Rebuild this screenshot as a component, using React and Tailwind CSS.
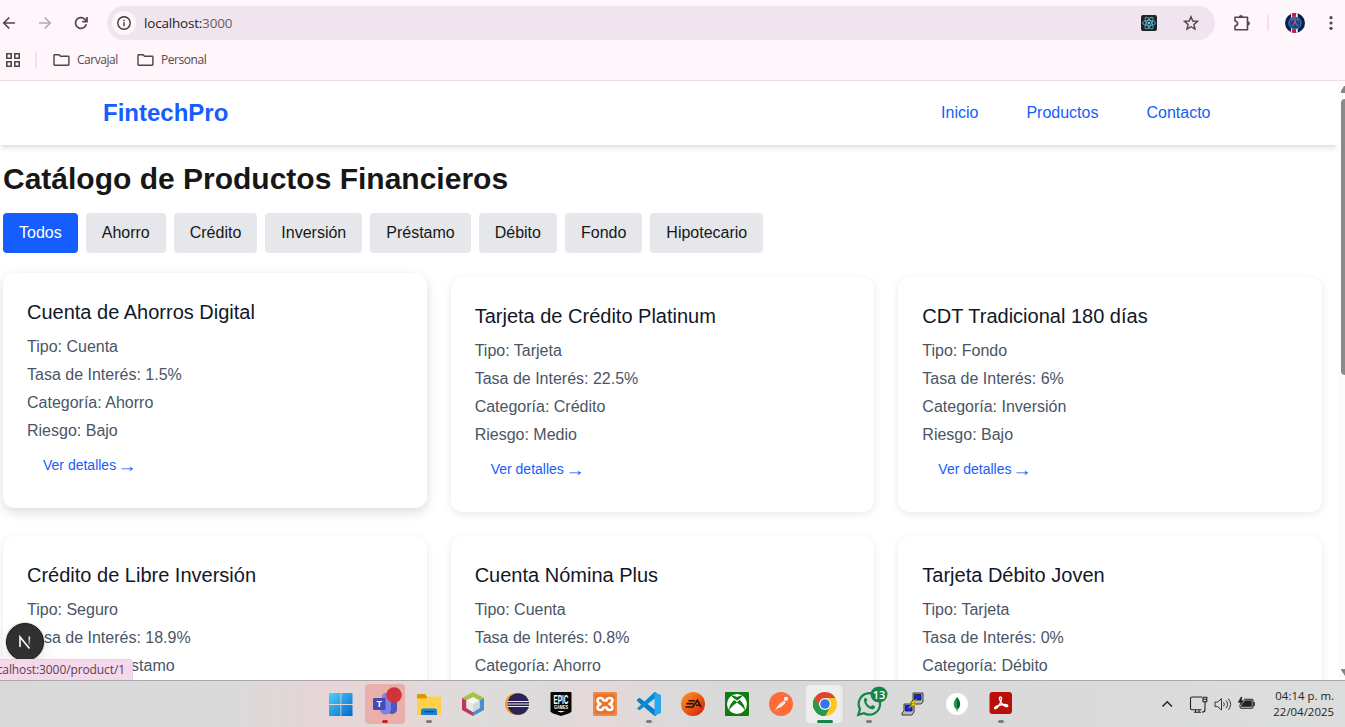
import React from 'react';

const categories = ['Todos', 'Ahorro', 'Crédito', 'Inversión', 'Préstamo', 'Débito', 'Fondo', 'Hipotecario'];

const products = [
  { name: 'Cuenta de Ahorros Digital', type: 'Cuenta', rate: '1.5%', category: 'Ahorro', risk: 'Bajo', hovered: true },
  { name: 'Tarjeta de Crédito Platinum', type: 'Tarjeta', rate: '22.5%', category: 'Crédito', risk: 'Medio' },
  { name: 'CDT Tradicional 180 días', type: 'Fondo', rate: '6%', category: 'Inversión', risk: 'Bajo' },
  { name: 'Crédito de Libre Inversión', type: 'Seguro', rate: '18.9%', category: 'Préstamo' },
  { name: 'Cuenta Nómina Plus', type: 'Cuenta', rate: '0.8%', category: 'Ahorro' },
  { name: 'Tarjeta Débito Joven', type: 'Tarjeta', rate: '0%', category: 'Débito' },
];

function Folder() {
  return (
    <svg className="block h-4 w-[17px] shrink-0" viewBox="0 0 17 16" fill="none" stroke="#4f4548" strokeWidth="1.4">
      <path d="M1 3.2Q1 2.7 1.5 2.7H6L7.6 4.2H15.3Q15.9 4.2 15.9 4.8V12.6Q15.9 13.3 15.3 13.3H1.7Q1 13.3 1 12.6Z" />
    </svg>
  );
}

function ReactBadge() {
  return (
    <svg className="block size-4" viewBox="0 0 16 16">
      <rect width="16" height="16" rx="2" fill="#222326" />
      <g fill="none" stroke="#5ab5cf" strokeWidth=".9">
        <ellipse cx="8" cy="8" rx="6.5" ry="2.5" />
        <ellipse cx="8" cy="8" rx="6.5" ry="2.5" transform="rotate(60 8 8)" />
        <ellipse cx="8" cy="8" rx="6.5" ry="2.5" transform="rotate(120 8 8)" />
      </g>
      <circle cx="8" cy="8" r="1.3" fill="#6bd0ec" />
    </svg>
  );
}

function Avatar() {
  return (
    <svg className="block size-5" viewBox="0 0 20 20">
      <defs><clipPath id="avatar"><circle cx="10" cy="10" r="10" /></clipPath></defs>
      <g clipPath="url(#avatar)">
        <rect width="20" height="20" fill="#06204d" />
        <rect x="6" width="1.2" height="20" fill="#eef0f5" />
        <rect x="7" width="3.2" height="20" fill="#cf2038" />
        <rect x="10.8" width="2" height="20" fill="#eef0f5" />
        <circle cx="10" cy="10" r="6.2" fill="#14498f" stroke="#8aa6cf" strokeWidth=".6" />
        <path d="M10 6.500 9.400 10 7 13M10 6.500l.6 3.500 2.400 3" stroke="#d84a62" strokeWidth="1.1" fill="none" />
        <path d="M6 7.500Q10 4 14 7.500" stroke="#7fa1d3" strokeWidth=".7" fill="none" />
      </g>
    </svg>
  );
}

function BrowserChrome() {
  return (
    <div className="h-[81px] shrink-0 border-b border-[#eedbe9] bg-[#fef6fa] font-['Open_Sans',sans-serif]">
      <div className="flex h-[46px] items-center">
        <svg className="block h-6 w-[107px] shrink-0" viewBox="0 0 107 24" fill="none" strokeWidth="1.7">
          <path d="M15 12H4M9.3 6.5 3.8 12l5.5 5.5" stroke="#57434f" />
          <path d="M39 12h11M44.7 6.5l5.5 5.5-5.5 5.5" stroke="#b6abb0" />
          <path d="M86.2 13.1A5.4 5.4 0 1 1 84.7 8.2L86.5 10" stroke="#57434f" />
          <path d="M87 6v4.7h-4.7" stroke="#57434f" />
        </svg>
        <div className="flex h-[34px] w-[1108px] shrink-0 items-center rounded-full bg-[#f0e5ee] pr-4 pl-[5px]">
          <div className="flex size-6 items-center justify-center rounded-full bg-[#fef6fa]">
            <svg className="block size-4" viewBox="0 0 16 16" fill="none" stroke="#403539" strokeWidth="1.4">
              <circle cx="8" cy="8" r="6.2" />
              <path d="M8 7.3v3.9M8 4.7v1.5" />
            </svg>
          </div>
          <div className="ml-2 text-[13.5px] tracking-[-0.2px] text-[#231d20]">localhost:<span className="text-[#6b5d65]">3000</span></div>
          <div className="ml-auto flex items-center gap-[26px]">
            <ReactBadge />
            <svg className="block size-4" viewBox="0 0 16 16" fill="none" stroke="#50444b" strokeWidth="1.4">
              <path d="M8 1.7 9.8 6l4.7.4-3.6 3.1 1.1 4.6L8 11.7 4 14.1l1.1-4.6L1.5 6.4 6.2 6Z" />
            </svg>
          </div>
        </div>
        <svg className="ml-[18px] block h-[18px] w-[18px]" viewBox="0 0 18 18" fill="none" stroke="#57434f" strokeWidth="1.6">
          <path d="M2 3.300H14.500V15.700H2V12Q4.600 11.500 4.600 9.500 4.600 7.500 2 7Z" strokeLinejoin="round" />
          <path d="M6.300 3a1.700 1.700 0 0 1 3.400 0ZM15 7.700a1.700 1.700 0 0 1 0 3.400Z" fill="#57434f" strokeWidth=".6" />
        </svg>
        <div className="ml-4 h-4 w-0.5 bg-[#ffd8f2]" />
        <div className="ml-4"><Avatar /></div>
        <svg className="ml-[22px] block h-4 w-1.5" viewBox="0 0 6 16" fill="#57434f"><circle cx="4" cy="2.7" r="1.6" /><circle cx="4" cy="8" r="1.6" /><circle cx="4" cy="13.3" r="1.6" /></svg>
      </div>
      <div className="flex h-7 items-center pl-1.5 text-[12px] tracking-[-0.45px] text-[#54474e]">
        <svg className="block h-3.5 w-3.5" viewBox="0 0 14 14" fill="none" stroke="#4f4548" strokeWidth="1.6"><path d="M.8.8h4.4v4.4H.8zM8.8.8h4.4v4.4H8.8zM.8 8.8h4.4v4.4H.8zM8.8 8.8h4.4v4.4H8.8z" /></svg>
        <div className="ml-[15px] h-4 w-0.5 bg-[#ffd8f2]" />
        <div className="ml-[16px] flex w-[84px] items-center gap-[7px]"><Folder />Carvajal</div>
        <div className="flex items-center gap-[7px]"><Folder />Personal</div>
      </div>
    </div>
  );
}

function ProductCard({ product }) {
  return (
    <article className={product.hovered
      ? 'h-[235px] -translate-y-1 rounded-xl bg-white px-6 pt-[25px] shadow-[0_4px_12px_rgba(0,0,0,0.15)]'
      : 'h-[235px] rounded-xl bg-white px-6 pt-[25px] shadow-[0_2px_8px_rgba(0,0,0,0.09)]'}>
      <h2 className="mb-[9px] text-xl leading-7 text-[#101828]">{product.name}</h2>
      <div className="flex flex-col gap-1 text-base leading-6 text-[#4a5565]">
        <p>Tipo: {product.type}</p>
        <p>Tasa de Interés: {product.rate}</p>
        <p>Categoría: {product.category}</p>
        {product.risk && <p>Riesgo: {product.risk}</p>}
      </div>
      {product.risk && (
        <a className="mt-1 flex h-9 items-center px-4 text-sm leading-5 text-[#155dfc]">
          Ver detalles&nbsp;<span className="-ml-[3px] w-3.5 origin-left scale-x-[1.4] scale-y-[1.3]">→</span>
        </a>
      )}
    </article>
  );
}

function TaskIcon({ name }) {
  switch (name) {
    case 'windows':
      return <g><defs><linearGradient id="win" x2="1" y2="1"><stop stopColor="#4fd0fb" /><stop offset="1" stopColor="#0067c9" /></linearGradient></defs><path d="M0 1h11.500v11H0zM12.300 1H23.500v11H12.300zM0 13h11.500v11H0zM12.300 13H23.500v11H12.300z" fill="url(#win)" /></g>;
    case 'teams':
      return <g><circle cx="13" cy="5" r="4" fill="#7b83eb" /><path d="M14 10h10v7a5 5 0 0 1-9 3Z" fill="#4f56bd" /><path d="M7 9h11v8a5.5 5.5 0 0 1-11 0Z" fill="#7b83eb" /><rect y="6" width="12.5" height="12" rx="1" fill="#454bb0" /><text x="6.2" y="15.3" textAnchor="middle" fontSize="9" fontWeight="700" fill="#fff">T</text><circle cx="21" cy="3" r="7.8" fill="#d13438" /></g>;
    case 'files':
      return <g><path d="M0 3Q0 2 1 2H8L10 4.500v4H0Z" fill="#d99a00" /><path d="M0 6.500h9l2-2H23q1 0 1 1V22q0 1-1 1H1Q0 23 0 22Z" fill="#ffd04e" /><path d="M4 23v-4.500q0-2 2-2H18q2 0 2 2V23Z" fill="#1681d7" /><rect x="7" y="19" width="10" height="1.300" fill="#0a4b8c" /></g>;
    case 'cube':
      return <g><path d="M12 0 23 6 12 12 1 6Z" fill="#a7c344" /><path d="M1 6v12l11 6V12Z" fill="#bd3763" /><path d="M23 6v12l-11 6V12Z" fill="#4790cc" /><path d="M12 5 18.5 8.5V16L12 20 5.5 16V8.5Z" fill="#f5f7f2" /><path d="M12 12l6.5-3.5V16L12 20Z" fill="#ced9db" /><path d="M5.5 8.5 12 12v8l-6.5-4Z" fill="#e6e9e8" /></g>;
    case 'eclipse':
      return <g><circle cx="11" cy="12" r="11" fill="#f79a2c" /><circle cx="13.3" cy="12" r="10.8" fill="#2c2255" /><path d="M2.500 9.500h21.500M2.500 12h21.500M2.500 14.500h21.500" stroke="#e9e6f1" strokeWidth="1" /></g>;
    case 'epic':
      return <g><path d="M1.500 1Q1.500 0 2.500 0h19q1 0 1 1v18.500Q22.500 21 12 24 1.500 21 1.500 19.500Z" fill="#050707" /><text x="12" y="12" textAnchor="middle" fontSize="13" fontWeight="700" textLength="15" lengthAdjust="spacingAndGlyphs" fill="#fff">EPIC</text><text x="12" y="17.2" textAnchor="middle" fontSize="4.5" fontWeight="700" textLength="14" lengthAdjust="spacingAndGlyphs" fill="#fff">GAMES</text><path d="m8 19 4 1.5 4-1.5Z" fill="#fff" /></g>;
    case 'xampp':
      return <g><rect width="24" height="24" rx="2" fill="#e7742c" /><rect x="1" y="1" width="22" height="22" rx="2" fill="none" stroke="#f49c5e" /><path d="M7.500 12Q4.500 11 4.500 8.500 4.500 6 7.500 6 10 6 10.500 8.500H13.500Q14 6 16.500 6 19.500 6 19.500 8.500 19.500 11 16.500 12 19.500 13 19.500 15.500 19.500 18 16.500 18 14 18 13.500 15.500H10.500Q10 18 7.500 18 4.500 18 4.500 15.500 4.500 13 7.500 12Z" fill="none" stroke="#fff" strokeWidth="2.600" strokeLinejoin="round" /></g>;
    case 'code':
      return <g><path d="M0 7.500 2.500 5.800 19 18.500V24h-1.500L0 9Z" fill="#087dcc" /><path d="M0 16.500 17.500 0H19v5.500L2.500 18.200 0 16.500Z" fill="#078bd5" /><path d="M17.500 0 24 3v18l-6.500 3Z" fill="#29a8ee" /></g>;
    case 'ea':
      return <g><defs><linearGradient id="ea" x2="1" y2="1"><stop stopColor="#ff992b" /><stop offset=".5" stopColor="#ef5b10" /><stop offset="1" stopColor="#c51b1c" /></linearGradient></defs><circle cx="12" cy="12" r="12" fill="url(#ea)" /><path d="M7.5 8.8h6.500M5.500 11.600h7M4.500 15h7.300l4.600-6.700 3.800 7M15 13.200h4" fill="none" stroke="#24110b" strokeWidth="1.6" /></g>;
    case 'xbox':
      return <g><rect width="24" height="24" rx="1" fill="#107c10" /><circle cx="12" cy="12" r="10" fill="#fff" /><path d="M6 3.500Q9 3 12 5q3-2 6-1.500L15 6.500 12 8.500 9 6.500Z" fill="#107c10" /><path d="M9.200 8Q4.500 12 3.800 18.500 6 15 12 10.500 18 15 20.200 18.500 19.500 12 14.800 8L12 10Z" fill="#107c10" /></g>;
    case 'postman':
      return <g><circle cx="12" cy="12" r="12" fill="#ff6c37" /><path d="m5.500 18 6.500-7.500 3.500-2 .8 2.500-3.800 3.500Z" fill="#fff" /><circle cx="17" cy="6.8" r="2.1" fill="#fff" /><path d="M5.5 18.5h4M11 14l3-4" stroke="#ff9b76" strokeWidth=".7" /></g>;
    case 'chrome':
      return <g><circle cx="12" cy="12" r="12" fill="#fdc720" /><path d="M12 12 1.600 6A12 12 0 0 1 22.400 6H12Z" fill="#de4436" /><path d="M1.600 6A12 12 0 0 0 12 24l5.200-9L12 12 6.800 15Z" fill="#249b4c" /><path d="M1.600 6 6.800 15 12 12 12 6Z" fill="#de4436" /><path d="M1.600 6A12 12 0 0 0 12 24l5.200-9H6.800Z" fill="#249b4c" /><circle cx="12" cy="12" r="6" fill="#fff" /><circle cx="12" cy="12" r="4.800" fill="#3078ed" /></g>;
    case 'whatsapp':
      return <g><path d="m1.200 22.800 1.800-5.700A10.700 10.700 0 1 1 7 21.200Z" fill="none" stroke="#168447" strokeWidth="2.200" /><path d="M7.500 6.300c.8-1 1.700-.6 2.100.4l.7 1.600-1 1.600c.9 2.200 2.200 3.600 4.600 4.600l1.600-1.500 2.400 1.200c.6.500-.2 2.300-1.500 3-4 1.400-11.400-6-8.900-10.900Z" fill="#168447" /><rect x="13.500" y="-5.300" width="17" height="15.600" rx="7.800" fill="#168447" /><text x="22" y="6.500" textAnchor="middle" fontFamily="Open Sans" fontSize="11" fontWeight="600" fill="#fff">13</text></g>;
    case 'putty':
      return <g stroke="#161616" strokeWidth=".8"><path d="M12 1h10v9l-2 2H10v-2l2-2ZM3 12h10v8l-2 3H1v-2l2-2Z" fill="#b9b9b9" /><path d="M13.5 2.5H20V8h-6.500zM4.500 13.500H11V19H4.500z" fill="#1022ef" /><path d="m16 7-7 4 3 .5L7.500 16l8-4-3-.7Z" fill="#ffec00" stroke="#a58f00" /></g>;
    case 'mongo':
      return <g><circle cx="12" cy="12" r="11" fill="#fff" /><path d="M12 5C7.500 10 8 15 12 18Z" fill="#159a52" /><path d="M12 5c4.500 5 4 10 0 13Z" fill="#07633c" /><path d="M12 16v3.500" stroke="#6e9c87" /></g>;
    case 'acrobat':
      return <g><rect x=".5" y="0" width="22.500" height="22" rx="3" fill="#b90f08" /><path d="M11.500 5c2 0 1 5-2 9-1.500 2.300-3.500 3.500-4 2.300-.7-1.800 8-4.500 12-3.500 2 .5 1.500 2.300-.5 1.700C13.500 13.500 10.300 8.500 10.400 6q.1-1 1.100-1Z" fill="none" stroke="#fff" strokeWidth="1.400" /></g>;
    default:
      return null;
  }
}

const apps = ['windows', 'teams', 'files', 'cube', 'eclipse', 'epic', 'xampp', 'code', 'ea', 'xbox', 'postman', 'chrome', 'whatsapp', 'putty', 'mongo', 'acrobat'];
const running = ['files', 'code', 'whatsapp', 'acrobat'];

function Taskbar() {
  return (
    <footer className="flex h-[47px] shrink-0 items-start border-t border-[#aaa7a8] bg-[linear-gradient(90deg,#d9d9d9_0px,#dadada_235px,#e5d5d6_310px,#e5d7d8_410px,#dcdcdb_480px,#dedada_550px,#e6d8d9_600px,#dcd9d9_660px,#d9d9d9_740px,#dadada_1100px,#dcdddd_1345px)] pl-[319px]">
      {apps.map((app) => (
        <div key={app} className="relative flex h-[46px] w-11 shrink-0 items-center justify-center pr-px">
          {app === 'teams' && <div className="absolute top-[3px] left-[2px] h-10 w-10 rounded bg-[#eaaeab]" />}
          {app === 'chrome' && <><div className="absolute top-1 left-1 h-[38px] w-[37px] rounded border-r border-[#cfcfcf] bg-[#e8e8e8]" /><div className="absolute top-1 left-[3px] h-[38px] w-[34px] rounded bg-[#eeeeee]" /></>}
          <svg className="relative block size-6 overflow-visible font-['Liberation_Sans',sans-serif]" viewBox="0 0 24 24"><TaskIcon name={app} /></svg>
          {running.includes(app) && <span className="absolute top-[39px] left-[19px] h-[3px] w-1.5 rounded-full bg-[#7d7d7d]" />}
          {app === 'teams' && <span className="absolute top-[39px] left-[19px] h-[3px] w-1.5 rounded-full bg-[#c52920]" />}
          {app === 'chrome' && <span className="absolute top-[39px] left-[14px] h-[3px] w-4 rounded-full bg-[#168447]" />}
        </div>
      ))}
      <div className="ml-auto flex h-[46px] shrink-0 items-center pr-[11px] text-[#252525]">
        <svg className="mr-[12px] block h-5 w-[95px]" viewBox="0 0 95 20" fill="none" stroke="#222" strokeWidth="1.1">
          <path d="m1.500 12.500 4.700-4.700 4.700 4.700" strokeWidth="1.5" />
          <path d="M41 3H31q-1.500 0-1.500 1.500v9.700q0 1.500 1.500 1.500h9.500M33 18.200h7M34.500 15.700v2.500M38 15.700v2.500M42 3.300h3.800v4.500H42zM42 5.200h3.800M44 8v7.500q0 2.700-3 2.700" />
          <path d="M54 8h2.500l4-3.300v11.200l-4-3.300H54ZM62.500 8.300q1.800 2 0 4M65 6.500q3.200 3.800 0 7.600M67.300 4.700q4.700 5.600 0 11.200" strokeWidth=".9" />
          <path d="M83 5.200h7.500q1.500 0 1.500 1.500v6q0 1.500-1.500 1.500H80.500q-1.500 0-1.500-1.500V12M93.200 8v4" />
          <path d="M84 6.500h6.700v6.300H80.300V11Z" fill="#222" strokeWidth=".3" />
          <path d="m80 3-3 5.500h2.500L78.500 12l4.500-5.500h-2.500L81 3Z" fill="#222" strokeWidth=".3" />
        </svg>
        <div className="w-[66px] text-right font-['Open_Sans',sans-serif] text-[11.4px] leading-4 tracking-[0.02px] whitespace-nowrap"><div>04:14 p. m.</div><div>22/04/2025</div></div>
      </div>
    </footer>
  );
}

export default function App() {
  return (
    <div className="flex h-[727px] w-[1345px] flex-col overflow-hidden bg-white font-['Liberation_Sans',Arial,sans-serif]">
      <BrowserChrome />
      <div className="relative flex h-[599px] shrink-0 overflow-hidden">
        <div className="w-[1338px] shrink-0">
          <header className="flex h-16 items-center justify-between bg-white pr-[127.5px] pl-[103px] shadow-[0_4px_6px_-1px_rgba(0,0,0,0.1),0_2px_4px_-2px_rgba(0,0,0,0.1)]">
            <div className="text-2xl font-bold text-[#155dfc]">FintechPro</div>
            <nav className="flex gap-12 text-base text-[#155dfc]"><a>Inicio</a><a>Productos</a><a>Contacto</a></nav>
          </header>
          <main className="w-[1322px] pt-4 pl-[3px]">
            <h1 className="text-3xl leading-9 font-bold text-[#171717]">Catálogo de Productos Financieros</h1>
            <div className="mt-4 flex gap-2">
              {categories.map((category, i) => (
                <button key={category} className={i === 0 ? 'h-10 rounded bg-[#155dfc] px-4 text-base text-white' : 'h-10 rounded bg-[#e5e7eb] px-4 text-base text-[#171717]'}>{category}</button>
              ))}
            </div>
            <div className="mt-6 grid grid-cols-3 gap-6">
              {products.map((product) => <ProductCard key={product.name} product={product} />)}
            </div>
          </main>
        </div>
        <div className="flex w-[7px] flex-col items-end bg-[#fcfcfc] pt-[5px]">
          <svg className="block h-[7px] w-1" viewBox="0 0 4 7"><path d="M0 7v-2L3 0h1v7Z" fill="#858585" /></svg>
          <div className="mt-1.5 h-[276px] w-1 rounded-l bg-[#8a8a8a]" />
          <svg className="mt-auto mb-1 block h-[7px] w-1" viewBox="0 0 4 7"><path d="M0 0h4v7L0 1Z" fill="#858585" /></svg>
        </div>
        <div className="absolute bottom-[19px] left-[6px] flex size-[38px] items-center justify-center rounded-full border border-[#171717] bg-[#303030] shadow-[0_0_0_1px_rgba(0,0,0,0.12),0_8px_20px_rgba(0,0,0,0.1)]">
          <svg className="block size-4" viewBox="0 0 16 16" fill="none" strokeWidth="1.6"><defs><linearGradient id="fade" gradientUnits="userSpaceOnUse" x1="0" x2="0" y1="2" y2="12"><stop stopColor="#fff" /><stop offset="1" stopColor="#555" /></linearGradient></defs><path d="M3 13V3l9.500 11.500" stroke="#fff" /><path d="M12.3 2.5V11" stroke="url(#fade)" /></svg>
        </div>
        <div className="absolute bottom-0 left-0 flex h-[21px] w-[133px] items-center justify-end overflow-hidden rounded-tr border-t border-r border-[#ead0e2] bg-[#f6d8ed] pr-[7px] font-['Open_Sans',sans-serif] text-[12px] tracking-[-0.1px] whitespace-nowrap text-[#57434f]">localhost:3000/product/1</div>
      </div>
      <Taskbar />
    </div>
  );
}
